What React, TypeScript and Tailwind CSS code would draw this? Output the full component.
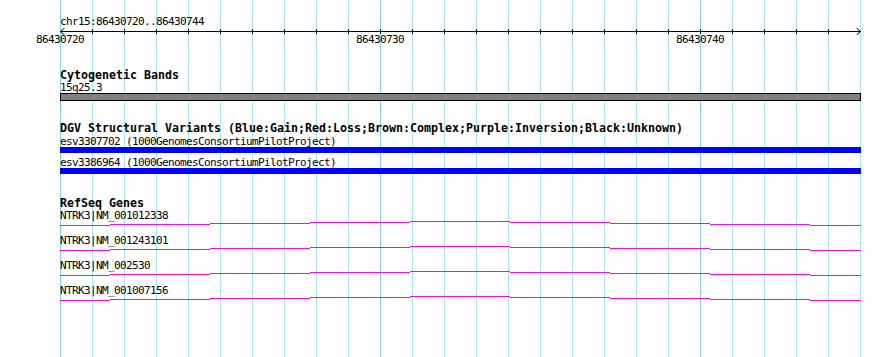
import React from "react";

// grid lines every bp (32px), from 86430720 at x=60 to 86430745 at x=860
const GRID = Array.from({ length: 26 }, (_, i) => 60 + 32 * i);

const RULER_LABELS = ["86430720", "86430730", "86430740"];

// intron "hat" drawn as a staircase: [from, to, drop]
const HAT: [number, number, number][] = [
    [0, 50, 4],
    [50, 150, 3],
    [150, 250, 2],
    [250, 350, 1],
    [350, 450, 0],
    [450, 550, 1],
    [550, 650, 2],
    [650, 750, 3],
    [750, 801, 4],
];

const GENES = ["NTRK3|NM_001012338", "NTRK3|NM_001243101", "NTRK3|NM_002530", "NTRK3|NM_001007156"];

const VARIANTS = ["esv3307702 (1000GenomesConsortiumPilotProject)", "esv3386964 (1000GenomesConsortiumPilotProject)"];

function Label({ children, className = "" }: { children: React.ReactNode; className?: string }) {
    return <div className={`h-[11px] text-[11px] leading-[11px] tracking-[-0.62px] whitespace-nowrap ${className}`}>{children}</div>;
}

function TrackTitle({ children, className = "" }: { children: React.ReactNode; className?: string }) {
    return <div className={`h-[12px] text-[11.63px] leading-[12px] font-bold whitespace-nowrap ${className}`}>{children}</div>;
}

function Axis() {
    return (
        <svg width={801} height={8} className="block">
            <rect x={0} y={4} width={801} height={1} fill="#000" shapeRendering="crispEdges" />
            {GRID.slice(1, -1).map((x) => (
                <rect key={x} x={x - 60} y={2} width={1} height={5} fill="#000" shapeRendering="crispEdges" />
            ))}
            <path d="M4.5 1 L0.5 4.5 L4.5 8" stroke="#000" fill="none" strokeWidth={1} />
            <path d="M796.5 1 L800.5 4.5 L796.5 8" stroke="#000" fill="none" strokeWidth={1} />
        </svg>
    );
}

function Hat() {
    return (
        <svg width={801} height={5} className="block" shapeRendering="crispEdges">
            {HAT.map(([a, b, d]) => (
                <rect key={a} x={a} y={d} width={b - a} height={1} fill="#ff00ff" />
            ))}
        </svg>
    );
}

export default function App() {
    return (
        <div className="relative w-[890px] h-[357px] overflow-hidden bg-white text-black font-['DejaVu_Sans_Mono',monospace]">
            <svg className="absolute inset-0" width={890} height={357} shapeRendering="crispEdges">
                {GRID.map((x, i) => (
                    <rect key={x} x={x} y={0} width={1} height={357} fill={i % 10 === 0 ? "#7fd0ee" : "#a6eaf2"} />
                ))}
            </svg>

            <div className="relative flex flex-col pl-[60px]">
                {/* ruler */}
                <Label className="mt-[16px]">chr15:86430720..86430744</Label>
                <Axis />
                <div className="-mt-px -ml-[24px] flex gap-[272px]">
                    {RULER_LABELS.map((l) => (
                        <Label key={l} className="w-[48px]">{l}</Label>
                    ))}
                </div>

                {/* cytogenetic bands */}
                <TrackTitle className="mt-[24px]">Cytogenetic Bands</TrackTitle>
                <Label className="mt-px">15q25.3</Label>
                <div className="w-[801px] h-[8px] border border-black bg-[#808080]" />

                {/* DGV */}
                <TrackTitle className="mt-[21px]">DGV Structural Variants (Blue:Gain;Red:Loss;Brown:Complex;Purple:Inversion;Black:Unknown)</TrackTitle>
                {VARIANTS.map((v, i) => (
                    <div key={v} className={i === 0 ? "mt-[2px]" : "mt-[4px]"}>
                        <Label>{v}</Label>
                        <div className="w-[801px] h-[6px] bg-[#0000ff]" />
                    </div>
                ))}

                {/* RefSeq */}
                <TrackTitle className="mt-[23px]">RefSeq Genes</TrackTitle>
                <div className="mt-px flex flex-col gap-[9px]">
                    {GENES.map((g) => (
                        <div key={g}>
                            <Label>{g}</Label>
                            <Hat />
                        </div>
                    ))}
                </div>
            </div>
        </div>
    );
}
